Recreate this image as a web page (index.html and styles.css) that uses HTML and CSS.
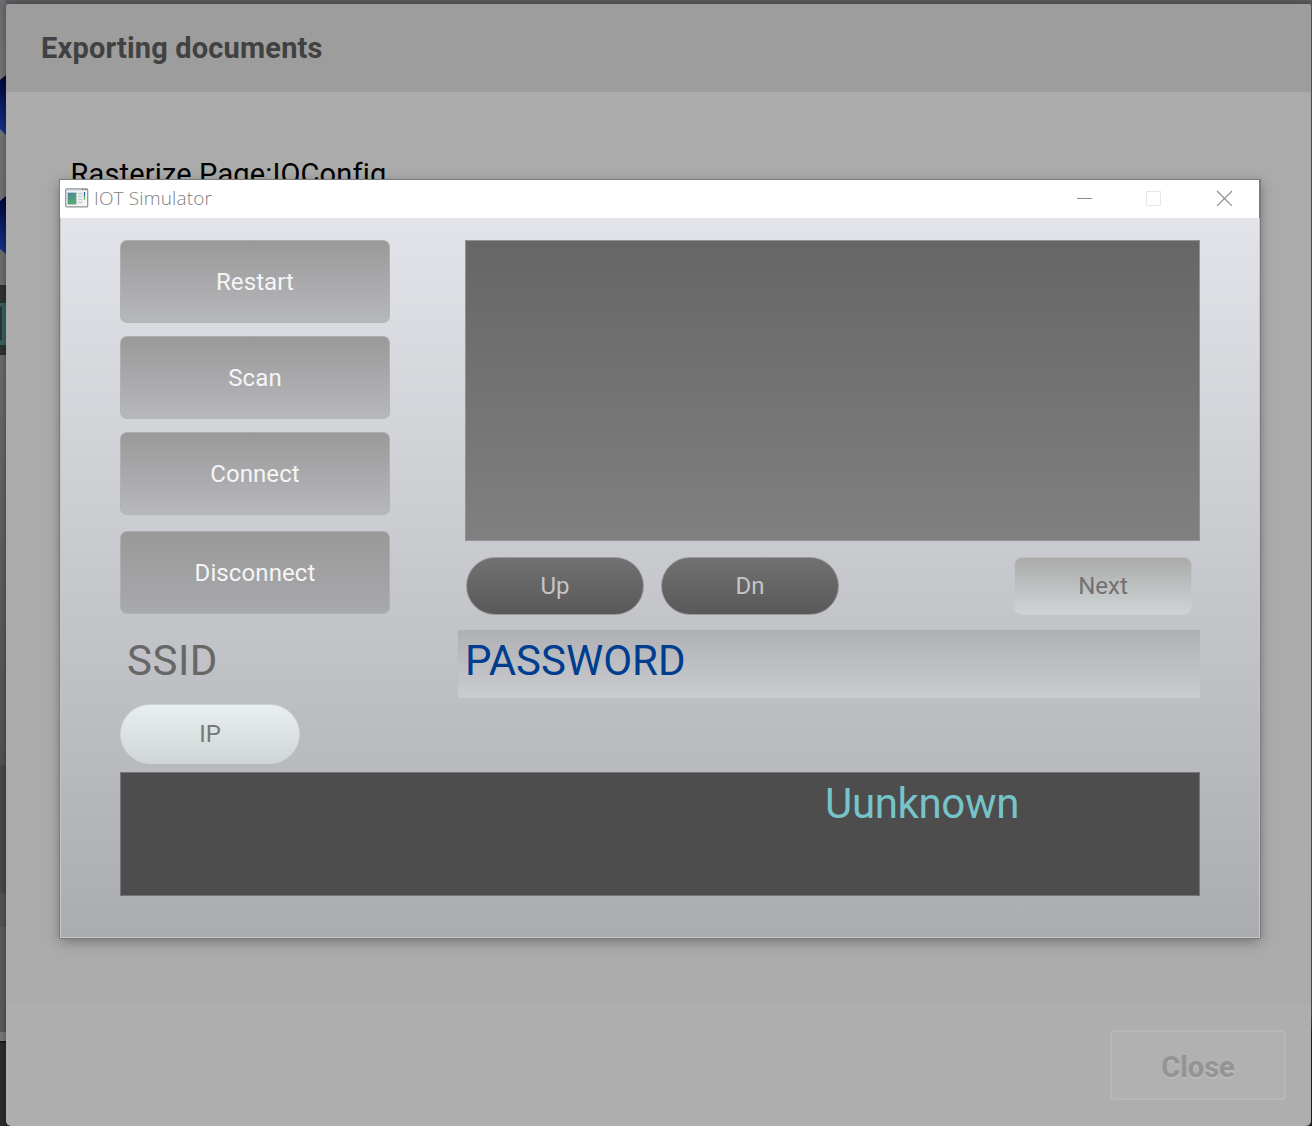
FILE: index.html
```html
<!DOCTYPE html>
<html lang="en">
<head>
<meta charset="utf-8">
<title>Exporting documents</title>
<link rel="stylesheet" href="styles.css">
</head>
<body>
<div class="backdrop">
  <svg class="edge" width="6" height="1126" viewBox="0 0 6 1126" aria-hidden="true">
    <defs>
      <linearGradient id="wall" x1="0" y1="0" x2="0" y2="1"><stop offset="0" stop-color="#6b6c6f"/><stop offset=".08" stop-color="#737373"/><stop offset=".3" stop-color="#696a6d"/><stop offset=".68" stop-color="#505154"/><stop offset="1" stop-color="#505151"/></linearGradient>
      <linearGradient id="blue" x1="0" y1="0" x2="0" y2="1"><stop offset="0" stop-color="#000536"/><stop offset="1" stop-color="#17338a"/></linearGradient>
    </defs>
    <rect width="6" height="1126" fill="url(#wall)"/>
    <path d="M0 80L6 75V135L0 129Z" fill="url(#blue)"/>
    <path d="M0 201L6 196V254L0 249Z" fill="url(#blue)"/>
    <rect y="285" width="6" height="70" fill="#2f3030"/>
    <rect y="303" width="6" height="42" fill="#376063"/>
    <rect x="-4" y="306" width="6" height="35" rx="2" fill="#2c3333"/>
    <rect y="765" width="6" height="128" fill="#474747"/>
    <rect y="893" width="6" height="34" fill="#505254"/>
    <rect y="927" width="6" height="105" fill="#595a5b"/>
    <rect y="1032" width="6" height="9" fill="#777"/>
    <rect y="1041" width="6" height="2" fill="#1c1c1c"/>
    <rect y="1043" width="6" height="83" fill="#2b2b2b"/>
  </svg>
  <main class="dialog">
    <header class="dialog-head">Exporting documents</header>
    <section class="dialog-body">Rasterize Page:IOConfig</section>
    <footer class="dialog-foot"><button class="close">Close</button></footer>
  </main>
</div>

<div class="window">
  <div class="titlebar">
    <svg class="app-icon" width="24" height="21" viewBox="0 0 24 21" aria-hidden="true">
      <defs><linearGradient id="pane" x1="0" y1="0" x2=".6" y2="1"><stop offset="0" stop-color="#4a7fa5"/><stop offset=".5" stop-color="#4d9a8c"/><stop offset="1" stop-color="#55ad68"/></linearGradient></defs>
      <rect x=".7" y=".9" width="22" height="18" rx="1" fill="#f4f5f6" stroke="#8b9297" stroke-width="1.2"/>
      <path d="M1.5 2H22" stroke="#bcc5ce"/><path d="M17 1.5h1.500M20 1.5h1.500" stroke="#59616a" stroke-width=".8"/>
      <rect x="2.5" y="4.5" width="9" height="12" fill="url(#pane)" stroke="#c5d0d4" stroke-width=".7"/>
      <path d="M13 5.5h4.500M13 8.500h4.500M13 11.500h4.500M13 14.500h4.500" stroke="#ccc" stroke-width="1.3"/>
      <path d="M19.500 4v4" stroke="#3267b1" stroke-width="1.300"/><path d="M19.500 8v3.500" stroke="#4ab768" stroke-width="1.300"/>
    </svg>
    <span class="window-title">IOT Simulator</span>
    <svg class="controls" width="156" height="16" viewBox="0 0 156 16" fill="none" aria-hidden="true">
      <path d="M0 8.500h15" stroke="#8c8c8c"/>
      <rect x="69.500" y="1.500" width="14" height="14" stroke="#e8e8e8"/>
      <path d="M140 1l15 15M155 1l-15 15" stroke="#8c8c8c" stroke-width="1.100"/>
    </svg>
  </div>
  <div class="panel">
    <div class="upper">
      <div class="actions">
        <button class="action">Restart</button>
        <button class="action">Scan</button>
        <button class="action">Connect</button>
        <button class="action action-last">Disconnect</button>
      </div>
      <div class="results">
        <div class="list"></div>
        <div class="nav">
          <button class="pill">Up</button>
          <button class="pill">Dn</button>
          <button class="next">Next</button>
        </div>
      </div>
    </div>
    <div class="credentials">
      <div class="ssid">SSID</div>
      <div class="password">PASSWORD</div>
    </div>
    <button class="ip">IP</button>
    <div class="console"><span class="status">Uunknown</span></div>
  </div>
</div>
</body>
</html>
```
FILE: styles.css
```css
* { box-sizing: border-box; }
body { margin: 0; font-family: Roboto, "Liberation Sans", sans-serif; overflow: hidden; }
button { font: inherit; border: 0; padding: 0; display: block; }

.backdrop { display: flex; width: 1312px; height: 1126px; background: linear-gradient(#5c5d5f 0 30%, #555658 90%, #202020 92%); }
.edge { flex: none; }
.dialog { width: 1305px; margin-top: 4px; height: 1122px; display: flex; flex-direction: column; border-radius: 2px 2px 5px 5px; overflow: hidden; box-shadow: 0 0 6px rgba(0,0,0,.35); }
.dialog-head { height: 88px; padding-left: 35px; background: #9d9d9d; color: #414141; font-size: 29px; font-weight: 700; line-height: 88px; letter-spacing: .17px; }
.dialog-body { height: 911px; padding: 65px 0 0 64.5px; background: #ababab; color: #000; font-size: 29px; line-height: 34px; letter-spacing: .15px; }
.dialog-foot { flex: 1; display: flex; justify-content: flex-end; padding: 27px 25px 0 0; background: #aeaeae; }
.close { width: 176px; height: 70px; padding-top: 4px; border: 2px solid #b7b7b7; border-radius: 4px; background: #b1b1b1; color: #949494; font-size: 29px; font-weight: 700; text-shadow: 0 2px 0 #bababa; }

.window { position: absolute; left: 60px; top: 180px; width: 1200px; box-shadow: 0 0 0 1px #7b7b7b, 0 3px 12px rgba(0,0,0,.35); }
.titlebar { display: flex; align-items: center; height: 38px; padding: 0 26px 0 5px; border-right: 1px solid #7b7b7b; background: #fff; }
.app-icon { margin-top: -1px; }
.window-title { margin-left: 5px; margin-top: -2px; color: #808080; font: 300 19px/36px "Open Sans", "Noto Sans", sans-serif; letter-spacing: .15px; }
.controls { margin-left: auto; margin-top: -2px; }

.panel { height: 720px; padding: 22px 59px 0; border: 1px solid #c6c7cc; border-width: 0 1px 1px; background: linear-gradient(#e3e4e9, #abacb0); }
.upper { display: flex; gap: 75px; height: 390px; }
.actions { width: 270px; display: flex; flex-direction: column; gap: 13px; }
.action { height: 83px; border: 1px solid rgba(178,179,183,.7); border-radius: 7px; background: linear-gradient(#999, #b7b8bc) border-box; color: #f5f5f5; font-size: 24px; letter-spacing: .1px; }
.action-last { margin-top: 3px; background: linear-gradient(#999, #a8a9ac) border-box; }
.results { width: 735px; }
.list { height: 301px; border: 1px solid #929395; background: linear-gradient(#666, #808080); }
.nav { display: flex; gap: 17px; padding: 16px 8px 0 1px; }
.pill { width: 178px; height: 58px; border: 1px solid #979899; border-radius: 29px; background: linear-gradient(#717171, #595959); color: #c4c5c8; font-size: 24px; }
.next { width: 178px; height: 58px; margin-left: auto; border: 1px solid rgba(200,203,204,.7); border-radius: 8px; background: linear-gradient(#aaaaa9, #bfc2c3 55%, #d0d5d5) border-box; color: #717171; font-size: 24px; }
.credentials { display: flex; justify-content: space-between; height: 68px; font-size: 42px; line-height: 62px; }
.ssid { padding-left: 7px; color: #676767; letter-spacing: .5px; }
.password { width: 742px; padding-left: 7px; background: linear-gradient(#afb0b4, #cbccd0); color: #003d8e; }
.ip { width: 180px; height: 60px; margin-top: 6px; border: 1px solid #d0d3d6; border-radius: 30px; background: linear-gradient(#e9eff1, #d0d5d5); color: #787878; font-size: 24px; }
.console { height: 124px; margin-top: 8px; padding-right: 180px; border: 1px solid #747576; background: #4d4d4d; text-align: right; }
.status { color: #76c4c9; font-size: 42px; line-height: 62px; letter-spacing: -.35px; }
```
